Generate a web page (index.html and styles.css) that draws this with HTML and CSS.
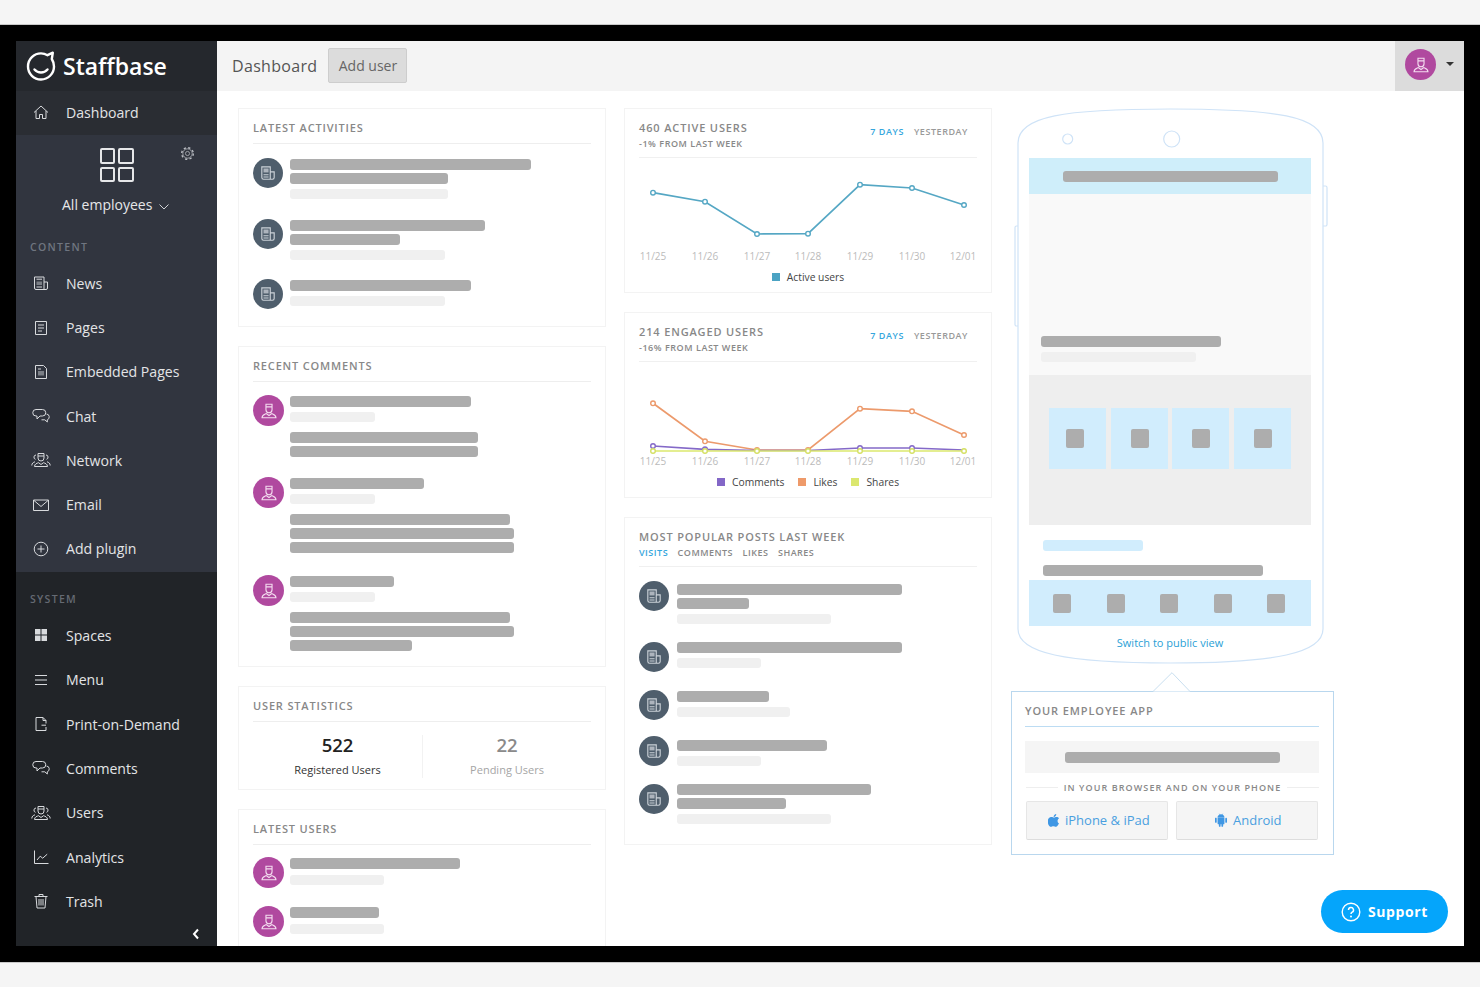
FILE: index.html
```html
<!DOCTYPE html>
<html lang="en">
<head>
<meta charset="utf-8">
<title>Staffbase Dashboard</title>
<link rel="stylesheet" href="styles.css">
</head>
<body>
<svg class="defs" aria-hidden="true">
  <symbol id="i-home" viewBox="0 0 20 20"><path d="M3 10.5 10 4l7 6.5M5 9v7.5h3.5v-4h3v4H15V9"/></symbol>
  <symbol id="i-news" viewBox="0 0 20 20"><path d="M3.5 4H13v12.500H5A1.500 1.500 0 0 1 3.500 15zM13 9h3.500v6a1.500 1.500 0 0 1-1.500 1.500h-2M5.500 6.200h5.500"/><rect class="soft" x="5.500" y="8.500" width="5.500" height="3.500"/><path d="M5.500 14h5.500"/></symbol>
  <symbol id="i-page" viewBox="0 0 20 20"><path d="M4.500 3.500h11v13h-11zM7 7h6M7 10h6M7 13h4"/></symbol>
  <symbol id="i-embed" viewBox="0 0 20 20"><path d="M4.500 3.500h8l3 3v10h-11zM7 7h3"/><rect class="soft" x="7" y="9" width="6" height="4.500"/></symbol>
  <symbol id="i-chat" viewBox="0 0 20 20"><path d="M5 3.500h6.500a3.200 3.200 0 0 1 0 6.500H9l-3 3v-3H5a3.250 3.250 0 0 1 0-6.500zM15.500 8a3 3 0 0 1 .8 5.800V16l-2.500-2.200H10.500"/></symbol>
  <symbol id="i-network" viewBox="0 0 20 20"><path d="M7 3.500h6V8a3 3 0 0 1-6 0zM7 6h6M3.500 16.500c0-2.600 2.500-3.200 4-3.800L10 14.500l2.500-1.800c1.500.6 4 1.200 4 3.800zM5 5a2.200 2.200 0 0 0-.5 4.300M15 5a2.200 2.200 0 0 1 .5 4.300M.8 15.500c0-2.200 1.500-3.200 3.200-3.700M19.200 15.500c0-2.200-1.500-3.200-3.200-3.700"/></symbol>
  <symbol id="i-mail" viewBox="0 0 20 20"><path d="M2.500 5h15v10.500h-15zM3 5.500l7 6 7-6"/></symbol>
  <symbol id="i-plus" viewBox="0 0 20 20"><circle cx="10" cy="10" r="6.800"/><path d="M10 6.500v7M6.500 10h7"/></symbol>
  <symbol id="i-spaces" viewBox="0 0 20 20"><rect class="solid" x="4" y="4" width="5.500" height="5.500"/><rect class="solid" x="10.500" y="4" width="5.500" height="5.500"/><rect class="solid" x="4" y="10.500" width="5.500" height="5.500"/><rect class="solid" x="10.500" y="10.500" width="5.500" height="5.500"/></symbol>
  <symbol id="i-menu" viewBox="0 0 20 20"><path d="M4 5.500h12M4 10h12M4 14.500h12"/></symbol>
  <symbol id="i-print" viewBox="0 0 20 20"><path d="M15 9.500v-3l-3-3H5v13h10V13M12 3.500v3h3M10.500 11.200h4.500"/></symbol>
  <symbol id="i-analytics" viewBox="0 0 20 20"><path d="M3.500 3.500v13h14M6 13l3.200-3.800 2.500 2 4.500-4"/></symbol>
  <symbol id="i-trash" viewBox="0 0 20 20"><path d="M3.500 5.500h13M8 5.500v-2h4v2M5 5.500l1 11.500h8l1-11.500M8 8v6.500M10 8v6.500M12 8v6.500"/></symbol>
  <symbol id="i-user" viewBox="0 0 16 16"><path d="M5.300 2h5.400v4.800a2.700 2.700 0 0 1-5.400 0zM5.300 4.300h5.400M1.800 14c0-2.600 2.200-3 3.700-3.700L8 12l2.500-1.700c1.500.7 3.700 1.100 3.700 3.700z"/></symbol>
  <symbol id="i-post" viewBox="0 0 16 16"><path d="M2.500 2.500h7.500v11H4a1.500 1.500 0 0 1-1.500-1.500zM10 7h3.500v5a1.500 1.500 0 0 1-1.500 1.500h-2"/><rect class="solid" x="4" y="4" width="4.500" height="3.500"/><path d="M4 9.500h4.500M4 11.500h4.500"/></symbol>
</svg>

<div class="frame">
  <div class="app">
    <aside class="sidebar">
      <div class="logo">
        <svg class="logo-mark" viewBox="0 0 30 31"><path d="M21.500 5.200C19.500 4 17.300 3.400 15 3.400 8 3.400 2 9 2 16.500S8 29.500 15 29.500 28 23.800 28 16.500c0-2.800-.8-5.300-2.200-7.500l1-6.300z"/><path d="M8.500 19.500c3.500 4 9.500 4 13 0"/></svg>
        <span class="logo-text">Staffbase</span>
      </div>
      <a class="nav nav-active"><svg class="ni"><use href="#i-home"/></svg>Dashboard</a>
      <div class="upper">
        <div class="group">
          <div class="group-grid"><i></i><i></i><i></i><i></i></div>
          <svg class="gear" viewBox="0 0 16 16"><circle cx="8" cy="8" r="2.200"/><circle cx="8" cy="8" r="5"/><circle class="teeth" cx="8" cy="8" r="6.200"/></svg>
          <div class="group-name">All employees <svg class="chev" viewBox="0 0 10 6"><path d="M.5.500 5 5 9.500.500"/></svg></div>
        </div>
        <div class="sec-label sec-content">CONTENT</div>
        <a class="nav"><svg class="ni"><use href="#i-news"/></svg>News</a>
        <a class="nav"><svg class="ni"><use href="#i-page"/></svg>Pages</a>
        <a class="nav"><svg class="ni"><use href="#i-embed"/></svg>Embedded Pages</a>
        <a class="nav"><svg class="ni"><use href="#i-chat"/></svg>Chat</a>
        <a class="nav"><svg class="ni"><use href="#i-network"/></svg>Network</a>
        <a class="nav"><svg class="ni"><use href="#i-mail"/></svg>Email</a>
        <a class="nav"><svg class="ni"><use href="#i-plus"/></svg>Add plugin</a>
      </div>
      <div class="lower">
        <div class="sec-label sec-system">SYSTEM</div>
        <a class="nav"><svg class="ni"><use href="#i-spaces"/></svg>Spaces</a>
        <a class="nav"><svg class="ni"><use href="#i-menu"/></svg>Menu</a>
        <a class="nav"><svg class="ni"><use href="#i-print"/></svg>Print-on-Demand</a>
        <a class="nav"><svg class="ni"><use href="#i-chat"/></svg>Comments</a>
        <a class="nav"><svg class="ni"><use href="#i-network"/></svg>Users</a>
        <a class="nav"><svg class="ni"><use href="#i-analytics"/></svg>Analytics</a>
        <a class="nav"><svg class="ni"><use href="#i-trash"/></svg>Trash</a>
        <svg class="collapse" viewBox="0 0 8 12"><path d="M6 1.500 2 6l4 4.500"/></svg>
      </div>
    </aside>

    <div class="content">
      <header class="topbar">
        <h1 class="page-title">Dashboard</h1>
        <button class="add-user">Add user</button>
        <div class="account">
          <span class="avatar avatar-user avatar-top"><svg><use href="#i-user"/></svg></span>
          <span class="caret"></span>
        </div>
      </header>

      <main class="main">
        <section class="col">
          <div class="card card-activities">
            <h2 class="card-head">LATEST ACTIVITIES</h2>
            <div class="card-body pt14">
              <div class="row">
                <span class="avatar avatar-post"><svg><use href="#i-post"/></svg></span>
                <div class="bars">
                  <div class="bar" style="width:241px"></div>
                  <div class="bar" style="width:158px"></div>
                  <div class="bar light" style="width:158px"></div>
                </div>
              </div>
              <div class="row mt20">
                <span class="avatar avatar-post"><svg><use href="#i-post"/></svg></span>
                <div class="bars">
                  <div class="bar" style="width:195px"></div>
                  <div class="bar" style="width:110px"></div>
                  <div class="bar light" style="width:155px"></div>
                </div>
              </div>
              <div class="row mt19">
                <span class="avatar avatar-post"><svg><use href="#i-post"/></svg></span>
                <div class="bars">
                  <div class="bar" style="width:181px"></div>
                  <div class="bar light" style="width:155px"></div>
                </div>
              </div>
            </div>
          </div>

          <div class="card card-comments">
            <h2 class="card-head">RECENT COMMENTS</h2>
            <div class="card-body pt13">
              <div class="row">
                <span class="avatar avatar-user"><svg><use href="#i-user"/></svg></span>
                <div class="bars">
                  <div class="bar" style="width:181px"></div>
                  <div class="bar light" style="width:85px"></div>
                  <div class="bar" style="width:188px"></div>
                  <div class="bar" style="width:188px"></div>
                </div>
              </div>
              <div class="row mt20">
                <span class="avatar avatar-user"><svg><use href="#i-user"/></svg></span>
                <div class="bars">
                  <div class="bar" style="width:134px"></div>
                  <div class="bar light" style="width:85px"></div>
                  <div class="bar" style="width:220px"></div>
                  <div class="bar" style="width:224px"></div>
                  <div class="bar" style="width:224px"></div>
                </div>
              </div>
              <div class="row mt22">
                <span class="avatar avatar-user"><svg><use href="#i-user"/></svg></span>
                <div class="bars">
                  <div class="bar" style="width:104px"></div>
                  <div class="bar light" style="width:85px"></div>
                  <div class="bar" style="width:220px"></div>
                  <div class="bar" style="width:224px"></div>
                  <div class="bar" style="width:122px"></div>
                </div>
              </div>
            </div>
          </div>

          <div class="card card-stats">
            <h2 class="card-head">USER STATISTICS</h2>
            <div class="stats">
              <div class="stat">
                <div class="stat-num">522</div>
                <div class="stat-label">Registered Users</div>
              </div>
              <div class="stat stat-muted">
                <div class="stat-num">22</div>
                <div class="stat-label">Pending Users</div>
              </div>
            </div>
          </div>

          <div class="card card-users">
            <h2 class="card-head">LATEST USERS</h2>
            <div class="card-body pt12">
              <div class="row">
                <span class="avatar avatar-user"><svg><use href="#i-user"/></svg></span>
                <div class="bars">
                  <div class="bar" style="width:170px"></div>
                  <div class="bar light" style="width:94px"></div>
                </div>
              </div>
              <div class="row mt18">
                <span class="avatar avatar-user"><svg><use href="#i-user"/></svg></span>
                <div class="bars">
                  <div class="bar" style="width:89px"></div>
                  <div class="bar light" style="width:94px"></div>
                </div>
              </div>
            </div>
          </div>
        </section>

        <section class="col">
          <div class="card card-active">
            <div class="card-head2">
              <div>
                <h2 class="head-title">460 ACTIVE USERS</h2>
                <div class="head-sub">-1% FROM LAST WEEK</div>
              </div>
              <div class="range"><span class="tab-on">7 DAYS</span><span>YESTERDAY</span></div>
            </div>
            <svg class="chart" viewBox="0 0 338 110">
              <polyline class="line l-blue" points="14,34.700 66,43.700 118,76 169,75.700 221,26.700 273,30 325,47"/>
              <g class="dots d-blue"><circle cx="14" cy="34.700" r="2.300"/><circle cx="66" cy="43.700" r="2.300"/><circle cx="118" cy="76" r="2.300"/><circle cx="169" cy="75.700" r="2.300"/><circle cx="221" cy="26.700" r="2.300"/><circle cx="273" cy="30" r="2.300"/><circle cx="325" cy="47" r="2.300"/></g>
              <g class="ticks"><text x="14" y="102">11/25</text><text x="66" y="102">11/26</text><text x="118" y="102">11/27</text><text x="169" y="102">11/28</text><text x="221" y="102">11/29</text><text x="273" y="102">11/30</text><text x="324" y="102">12/01</text></g>
            </svg>
            <div class="legend"><span class="lg"><i class="sw sw-blue"></i>Active users</span></div>
          </div>

          <div class="card card-engaged">
            <div class="card-head2">
              <div>
                <h2 class="head-title">214 ENGAGED USERS</h2>
                <div class="head-sub">-16% FROM LAST WEEK</div>
              </div>
              <div class="range"><span class="tab-on">7 DAYS</span><span>YESTERDAY</span></div>
            </div>
            <svg class="chart" viewBox="0 0 338 110">
              <polyline class="line l-orange" points="14,41.300 66,79.300 118,88 169,88 221,46.700 273,49.300 325,73"/>
              <polyline class="line l-purple" points="14,84 66,87.300 118,88.500 169,88.500 221,86 273,86 325,88"/>
              <polyline class="line l-yellow" points="14,89 66,89 118,89 169,89 221,89 273,89 325,89"/>
              <g class="dots d-orange"><circle cx="14" cy="41.300" r="2.300"/><circle cx="66" cy="79.300" r="2.300"/><circle cx="118" cy="88" r="2.300"/><circle cx="169" cy="88" r="2.300"/><circle cx="221" cy="46.700" r="2.300"/><circle cx="273" cy="49.300" r="2.300"/><circle cx="325" cy="73" r="2.300"/></g>
              <g class="dots d-purple"><circle cx="14" cy="84" r="2.300"/><circle cx="66" cy="87.300" r="2.300"/><circle cx="221" cy="86" r="2.300"/><circle cx="273" cy="86" r="2.300"/></g>
              <g class="dots d-yellow"><circle cx="14" cy="89" r="2.300"/><circle cx="66" cy="89" r="2.300"/><circle cx="118" cy="89" r="2.300"/><circle cx="169" cy="89" r="2.300"/><circle cx="221" cy="89" r="2.300"/><circle cx="273" cy="89" r="2.300"/><circle cx="325" cy="89" r="2.300"/></g>
              <g class="ticks"><text x="14" y="103">11/25</text><text x="66" y="103">11/26</text><text x="118" y="103">11/27</text><text x="169" y="103">11/28</text><text x="221" y="103">11/29</text><text x="273" y="103">11/30</text><text x="324" y="103">12/01</text></g>
            </svg>
            <div class="legend legend-wide">
              <span class="lg"><i class="sw sw-purple"></i>Comments</span>
              <span class="lg"><i class="sw sw-orange"></i>Likes</span>
              <span class="lg"><i class="sw sw-yellow"></i>Shares</span>
            </div>
          </div>

          <div class="card card-popular">
            <div class="card-head2">
              <div>
                <h2 class="head-title">MOST POPULAR POSTS LAST WEEK</h2>
                <div class="tabs"><span class="tab-on">VISITS</span><span>COMMENTS</span><span>LIKES</span><span>SHARES</span></div>
              </div>
            </div>
            <div class="card-body pt14">
              <div class="row">
                <span class="avatar avatar-post"><svg><use href="#i-post"/></svg></span>
                <div class="bars pb3">
                  <div class="bar" style="width:225px"></div>
                  <div class="bar" style="width:72px"></div>
                  <div class="bar light" style="width:154px"></div>
                </div>
              </div>
              <div class="row mt18">
                <span class="avatar avatar-post"><svg><use href="#i-post"/></svg></span>
                <div class="bars pb0">
                  <div class="bar" style="width:225px"></div>
                  <div class="bar light" style="width:84px"></div>
                </div>
              </div>
              <div class="row mt18">
                <span class="avatar avatar-post"><svg><use href="#i-post"/></svg></span>
                <div class="bars">
                  <div class="bar" style="width:92px"></div>
                  <div class="bar light" style="width:113px"></div>
                </div>
              </div>
              <div class="row mt16">
                <span class="avatar avatar-post"><svg><use href="#i-post"/></svg></span>
                <div class="bars pb4">
                  <div class="bar" style="width:150px"></div>
                  <div class="bar light" style="width:84px"></div>
                </div>
              </div>
              <div class="row mt18">
                <span class="avatar avatar-post"><svg><use href="#i-post"/></svg></span>
                <div class="bars pb0">
                  <div class="bar" style="width:194px"></div>
                  <div class="bar" style="width:109px"></div>
                  <div class="bar light" style="width:154px"></div>
                </div>
              </div>
            </div>
          </div>
        </section>

        <section class="col col-app">
          <div class="phone">
            <svg class="phone-shell" viewBox="0 0 312 558">
              <path d="M3 35C3 8 50 1 155.500 1s152.500 7 152.500 34v486c0 24-47 34-152.500 34S3 545 3 521z"/>
              <path d="M308 78h2.500a1.500 1.500 0 0 1 1.500 1.500v37a1.500 1.500 0 0 1-1.500 1.500H308M3 118H1.500A1.500 1.500 0 0 0 0 119.500v97A1.500 1.500 0 0 0 1.500 218H3"/>
              <circle cx="52.700" cy="31" r="5"/>
              <circle cx="156.700" cy="31" r="8"/>
            </svg>
            <div class="screen">
              <div class="scr-head"><div class="bar b-215"></div></div>
              <div class="scr-hero">
                <div class="bar b-180"></div>
                <div class="bar light b-155"></div>
              </div>
              <div class="scr-tiles">
                <div class="tile"><i class="sq"></i></div>
                <div class="tile"><i class="sq"></i></div>
                <div class="tile"><i class="sq"></i></div>
                <div class="tile"><i class="sq"></i></div>
              </div>
              <div class="scr-text">
                <div class="bar blue b-100"></div>
                <div class="bar b-220"></div>
              </div>
              <div class="scr-nav"><i class="sq"></i><i class="sq"></i><i class="sq"></i><i class="sq"></i><i class="sq"></i></div>
            </div>
            <a class="switch">Switch to public view</a>
          </div>

          <div class="panel">
            <svg class="pointer" viewBox="0 0 38 20"><path d="M0 19.500 19 .700l18 18.800"/></svg>
            <h2 class="panel-head">YOUR EMPLOYEE APP</h2>
            <div class="url-box"><div class="bar b-215"></div></div>
            <div class="divider"><span>IN YOUR BROWSER AND ON YOUR PHONE</span></div>
            <div class="stores">
              <a class="store">
                <svg class="store-icon apple" viewBox="0 0 14 16"><path d="M9.600 1c.1 1-.3 1.800-.8 2.400-.6.700-1.400 1.100-2.200 1-.1-.9.300-1.700.8-2.300C8 1.500 8.900 1.100 9.600 1zM12.800 11.700c-.4.900-.6 1.300-1.100 2-.7 1-1.600 2.200-2.800 2.200-1 0-1.300-.7-2.700-.7s-1.700.7-2.800.7c-1.200 0-2-1.100-2.700-2.100C-.6 11-.5 7.900.7 6.200 1.500 5 2.800 4.400 4 4.400c1.300 0 2 .7 3 .7s1.600-.7 3-.7c1 0 2.200.6 3 1.600-2.600 1.400-2.200 5.100-.2 5.700z"/></svg>
                iPhone &amp; iPad
              </a>
              <a class="store store-android">
                <svg class="store-icon android" viewBox="0 0 14 16"><path d="M3 5.500h8V12a1 1 0 0 1-1 1h-.5v2a1 1 0 0 1-2 0v-2h-1v2a1 1 0 0 1-2 0v-2H4a1 1 0 0 1-1-1zM.500 5.500a1 1 0 0 1 1.500.9v3.800a1 1 0 0 1-2 0V6.400a1 1 0 0 1 .5-.9zM12 6.400a1 1 0 0 1 2 0v3.800a1 1 0 0 1-2 0zM3 5c0-1.500.8-2.500 2-3.100L4.400.7l.3-.2L5.400 1.600a5 5 0 0 1 3.200 0L9.300.5l.3.2L9 1.900C10.200 2.500 11 3.500 11 5z"/></svg>
                Android
              </a>
            </div>
          </div>
        </section>

        <a class="support">
          <svg viewBox="0 0 20 20"><circle cx="10" cy="10" r="8.800"/><path class="q" d="M7.500 8a2.500 2.500 0 1 1 3.700 2.200c-.8.500-1.200 1-1.200 1.800"/><circle class="qd" cx="10" cy="14.500" r="1"/></svg>
          Support
        </a>
      </main>
    </div>
  </div>
</div>
</body>
</html>
```

FILE: styles.css
```css
* { box-sizing: border-box; }
html, body { margin: 0; height: 987px; overflow: hidden; }
body { background: #f5f5f5; font-family: "Open Sans", "Liberation Sans", sans-serif; color: #444; }
.defs { position: absolute; width: 0; height: 0; }
symbol path, symbol circle { fill: none; stroke: currentColor; stroke-width: 1; }
symbol rect.soft { fill: currentColor; opacity: .45; stroke: none; }
symbol rect.solid { fill: currentColor; stroke: none; opacity: .75; }
symbol#i-spaces rect.solid { opacity: 1; }

.frame { margin-top: 25px; height: 937px; background: #000; padding: 16px; box-shadow: 0 0 0 1px #c9c9c9; }
.app { display: flex; height: 905px; background: #fff; overflow: hidden; }

/* sidebar */
.sidebar { width: 201px; flex: none; display: flex; flex-direction: column; background: #31353f; color: #e6e7e9; }
.logo { height: 50px; display: flex; align-items: center; gap: 7px; padding: 0 0 0 10px; background: #25282d; }
.logo-mark { width: 30px; height: 31px; flex: none; margin-bottom: 1px; }
.logo-mark path { fill: none; stroke: #fff; stroke-width: 2.400; stroke-linejoin: round; stroke-linecap: round; }
.logo-text { font-family: "Open Sans", sans-serif; font-weight: 600; font-size: 23px; letter-spacing: 0; line-height: 28px; color: #fff; }
.nav { height: 44.250px; display: flex; align-items: center; gap: 15px; padding: 0 0 2px 15px; font-size: 14.100px; color: #e3e4e6; flex: none; }
.nav-active { background: #2a2d33; }
.lower .nav { height: 44.330px; }
.ni { width: 20px; height: 20px; flex: none; color: #d8dadd; }
.upper { background: #31353f; height: 437px; flex: none; display: flex; flex-direction: column; }
.group { position: relative; height: 90px; flex: none; display: flex; flex-direction: column; align-items: center; padding-top: 13px; }
.group-grid { display: grid; grid-template-columns: 15.500px 15.500px; grid-template-rows: 15.500px 15.500px; gap: 3px; }
.group-grid i { border: 2px solid #e6e7e9; border-radius: 2px; }
.gear { position: absolute; left: 164px; top: 11px; width: 15px; height: 15px; }
.gear circle { fill: none; stroke: #b9bcc2; stroke-width: .8; }
.gear .teeth { stroke-width: 1.500; stroke-dasharray: 2.400 2.470; }
.group-name { margin: 11px 2px 0 0; font-size: 14px; line-height: 24px; color: #e6e7e9; white-space: nowrap; }
.chev { width: 10px; height: 6px; margin-left: 3px; }
.chev path { fill: none; stroke: #d0d2d6; stroke-width: 1; }
.sec-label { font-size: 10.500px; font-weight: 600; letter-spacing: 1.300px; color: #6f7580; padding-left: 14px; flex: none; line-height: 14px; }
.sec-content { margin-top: 15px; margin-bottom: 8px; }
.lower { position: relative; flex: 1; background: #212428; }
.sec-system { margin-top: 20px; margin-bottom: 8px; color: #656a73; }
.collapse { position: absolute; left: 176px; top: 356px; width: 8px; height: 12px; }
.collapse path { fill: none; stroke: #fff; stroke-width: 2; }

/* top */
.content { flex: 1; min-width: 0; display: flex; flex-direction: column; }
.topbar { height: 50px; flex: none; display: flex; align-items: center; background: #f4f4f4; padding-left: 15px; }
.page-title { margin: 0; font-size: 16px; font-weight: 400; letter-spacing: .32px; color: #555; }
.add-user { margin: -2px 0 0 11px; width: 79px; height: 35px; padding: 0; background: #dcdcdc; border: 1px solid #cdcdcd; border-radius: 2px; font: 400 14px "Open Sans", sans-serif; color: #666; }
.account { margin-left: auto; width: 69px; height: 50px; background: #dcdcdc; display: flex; align-items: center; padding-left: 10px; }
.avatar-top { margin-top: -3px; }
.caret { margin-left: 10px; margin-top: -4px; border: 4px solid transparent; border-top-color: #333; border-bottom-width: 0; }

/* columns */
.main { position: relative; flex: 1; min-height: 0; overflow: hidden; display: flex; gap: 18px; padding: 17px 0 0 21px; background: #fff; }
.col { width: 368px; flex: none; }
.col-app { width: 323px; margin-left: 1px; }
.card { border: 1px solid #f3f3f3; padding: 0 14px; margin-bottom: 19px; }
.card-activities { height: 219px; }
.card-comments { height: 321px; }
.card-stats { height: 104px; }
.card-users { height: 200px; }
.card-active { height: 185px; }
.card-engaged { height: 186px; }
.card-popular { height: 328px; }
.card-head { margin: 0; height: 35px; border-bottom: 1px solid #eee; font-size: 11px; font-weight: 600; letter-spacing: .83px; line-height: 14px; padding-top: 12px; color: #888; }
.card-head2 { height: 49px; border-bottom: 1px solid #f0f0f0; display: flex; justify-content: space-between; padding-top: 12px; }
.head-title { margin: 0; font-size: 11px; font-weight: 600; letter-spacing: .86px; line-height: 14px; color: #888; }
.head-sub { margin-top: 2.500px; font-size: 9px; font-weight: 600; letter-spacing: .54px; line-height: 12px; color: #888; }
.range { display: flex; gap: 10px; padding: 4px 9px 0 0; font-size: 9px; font-weight: 600; letter-spacing: .56px; line-height: 14px; color: #999; }
.tab-on { color: #35a6dd; }
.tabs { display: flex; gap: 9.500px; margin-top: 3px; font-size: 9px; font-weight: 600; letter-spacing: .5px; line-height: 12px; color: #888; }

/* rows of placeholder bars */
.pt12 { padding-top: 12px; }
.pt13 { padding-top: 13px; }
.pt14 { padding-top: 14px; }
.mt16 { margin-top: 16px; }
.mt18 { margin-top: 18px; }
.mt19 { margin-top: 19px; }
.mt20 { margin-top: 20px; }
.mt22 { margin-top: 22px; }
.row { display: flex; gap: 7px; }
.bars { padding-top: 1px; flex: 1; min-width: 0; }
.avatar-user + .bars { margin-left: -1px; }
.card-popular .bars { margin-left: 1px; }
.bars.pb0 { padding-top: 0; }
.bars.pb3 { padding-top: 3px; }
.bars.pb4 { padding-top: 4px; }
.bar { height: 11px; margin-bottom: 3px; background: #adadad; border-radius: 3px; }
.bar:last-child { margin-bottom: 0; }
.bar.light { height: 10px; margin-top: 5px; margin-bottom: 0; background: #f0f0f0; }
.card-users .bar.light { margin-top: 6px; }
.bar:has(+ .light) { margin-bottom: 0; }
.light + .bar { margin-top: 10px; }
.bar.blue { background: #d1edfd; }
.b-100 { width: 100px; } .b-155 { width: 155px; } .b-180 { width: 180px; } .b-215 { width: 215px; } .b-220 { width: 220px; }

.avatar { flex: none; border-radius: 50%; display: flex; align-items: center; justify-content: center; }
.avatar svg { width: 18px; height: 18px; }
.avatar-post { width: 30px; height: 30px; background: #4f5e6c; color: #ccd2d8; }
.avatar-user { width: 31px; height: 31px; background: #b0499f; color: #f3dcef; }

/* stats */
.stats { display: grid; grid-template-columns: 1fr 1fr; margin-top: 13px; height: 41px; }
.stat { text-align: center; }
.stat + .stat { border-left: 1px solid #f2f2f2; }
.stat-num { font-size: 18.500px; font-weight: 600; line-height: 20px; color: #222; }
.stat-label { margin-top: 7px; font-size: 11px; line-height: 16px; color: #333; }
.stat-muted .stat-num { color: #8a8a8a; }
.stat-muted .stat-label { color: #a5a5a5; }

/* charts */
.chart { display: block; width: 338px; height: 110px; }
.line { fill: none; stroke-width: 1.700; }
.dots circle { fill: #fff; stroke-width: 1.400; }
.l-blue { stroke: #55a7c4; } .d-blue { stroke: #55a7c4; }
.l-orange { stroke: #ec9a6c; } .d-orange { stroke: #ec9a6c; }
.l-purple { stroke: #8469c8; } .d-purple { stroke: #8469c8; }
.l-yellow { stroke: #dbe86d; } .d-yellow { stroke: #d4e063; }
.ticks text { font-size: 10px; fill: #bbb; text-anchor: middle; font-family: "Open Sans", sans-serif; }
.legend { display: flex; justify-content: center; height: 18px; align-items: center; font-size: 10.300px; color: #444; }
.legend-wide { gap: 14px; margin-top: 1px; }
.lg { display: flex; align-items: center; gap: 7px; }
.sw { width: 8px; height: 8px; }
.sw-blue { background: #4ba3c3; } .sw-purple { background: #8367c7; } .sw-orange { background: #ee9a6a; } .sw-yellow { background: #dbe76f; }

/* phone */
.phone { position: relative; width: 306px; height: 556px; margin-left: 7px; padding-top: 50px; }
.phone-shell { position: absolute; left: -3px; top: 0; width: 312px; height: 558px; overflow: visible; }
.phone-shell path, .phone-shell circle { fill: none; stroke: #cfe3f7; stroke-width: 1.200; }
.screen { position: relative; width: 282px; margin-left: 11px; }
.scr-head { height: 36px; background: #cfeefa; display: flex; align-items: center; justify-content: center; }
.scr-head .bar, .url-box .bar { margin: 0; }
.scr-hero { height: 181px; background: #f9f9f9; display: flex; flex-direction: column; justify-content: flex-end; padding: 0 0 13px 12px; }
.scr-hero .bar { margin-bottom: 0; }
.scr-tiles { height: 150px; background: #eee; display: flex; gap: 4.670px; padding: 33px 0 0 20px; align-items: flex-start; }
.tile { width: 57px; height: 61px; background: #d1edfd; display: flex; align-items: center; justify-content: center; padding-left: 1px; }
.tile:first-child { padding: 0 5px 0 0; }
.sq { display: block; width: 18px; height: 19px; background: #adadad; border-radius: 2px; }
.scr-text { height: 55px; background: #fff; padding: 15px 0 0 14px; }
.scr-text .bar.blue { margin-bottom: 14px; }
.scr-nav { height: 46px; background: #d1edfd; display: flex; justify-content: space-between; align-items: center; padding: 0 26px 0 24px; }
.switch { position: relative; display: block; text-align: center; line-height: 34px; margin-left: -2px; font-size: 11px; color: #2a9fd6; }

/* employee app panel */
.panel { position: relative; margin-top: 27px; height: 164px; border: 1px solid #b9d7ee; padding: 0 14px; background: #fff; }
.pointer { position: absolute; left: 141px; top: -20px; width: 38px; height: 20px; overflow: visible; }
.pointer path { fill: #fff; stroke: #c9dff0; stroke-width: 1; }
.panel-head { margin: 0 0 0 -1px; height: 35px; padding-top: 12px; border-bottom: 1px solid #bcdcf3; font-size: 11px; font-weight: 600; letter-spacing: .9px; line-height: 14px; color: #888; }
.url-box { margin: 14px 0 0 -1px; height: 32px; background: #f5f5f5; display: flex; align-items: center; justify-content: center; }
.divider { display: flex; align-items: center; gap: 6px; margin-top: 6px; height: 16px; font-size: 9px; font-weight: 600; letter-spacing: 1.090px; color: #888; white-space: nowrap; }
.divider::before, .divider::after { content: ""; flex: 1; height: 1px; background: #eee; }
.stores { display: flex; gap: 8px; margin-top: 6px; }
.store { width: 142px; flex: none; height: 39px; display: flex; align-items: center; gap: 5px; padding: 0 0 2px 21px; background: #f5f5f5; border: 1px solid #e6e6e6; border-bottom-color: #ddd; border-radius: 2px; font-size: 13px; color: #4a9fe0; }
.store-android { padding-left: 38px; gap: 6px; }
.store-icon { width: 12px; height: 14px; flex: none; fill: #3f97e4; }

/* support */
.support { position: absolute; right: 16px; bottom: 13px; width: 127px; height: 43px; border-radius: 22px; background: #05a5fb; color: #fff; display: flex; align-items: center; gap: 7px; padding-left: 20px; font-size: 14px; font-weight: 700; letter-spacing: .6px; }
.support svg { width: 20px; height: 20px; flex: none; }
.support circle { fill: none; stroke: #fff; stroke-width: 1.400; }
.support .q { fill: none; stroke: #fff; stroke-width: 1.500; }
.support .qd { fill: #fff; stroke: none; }
```
